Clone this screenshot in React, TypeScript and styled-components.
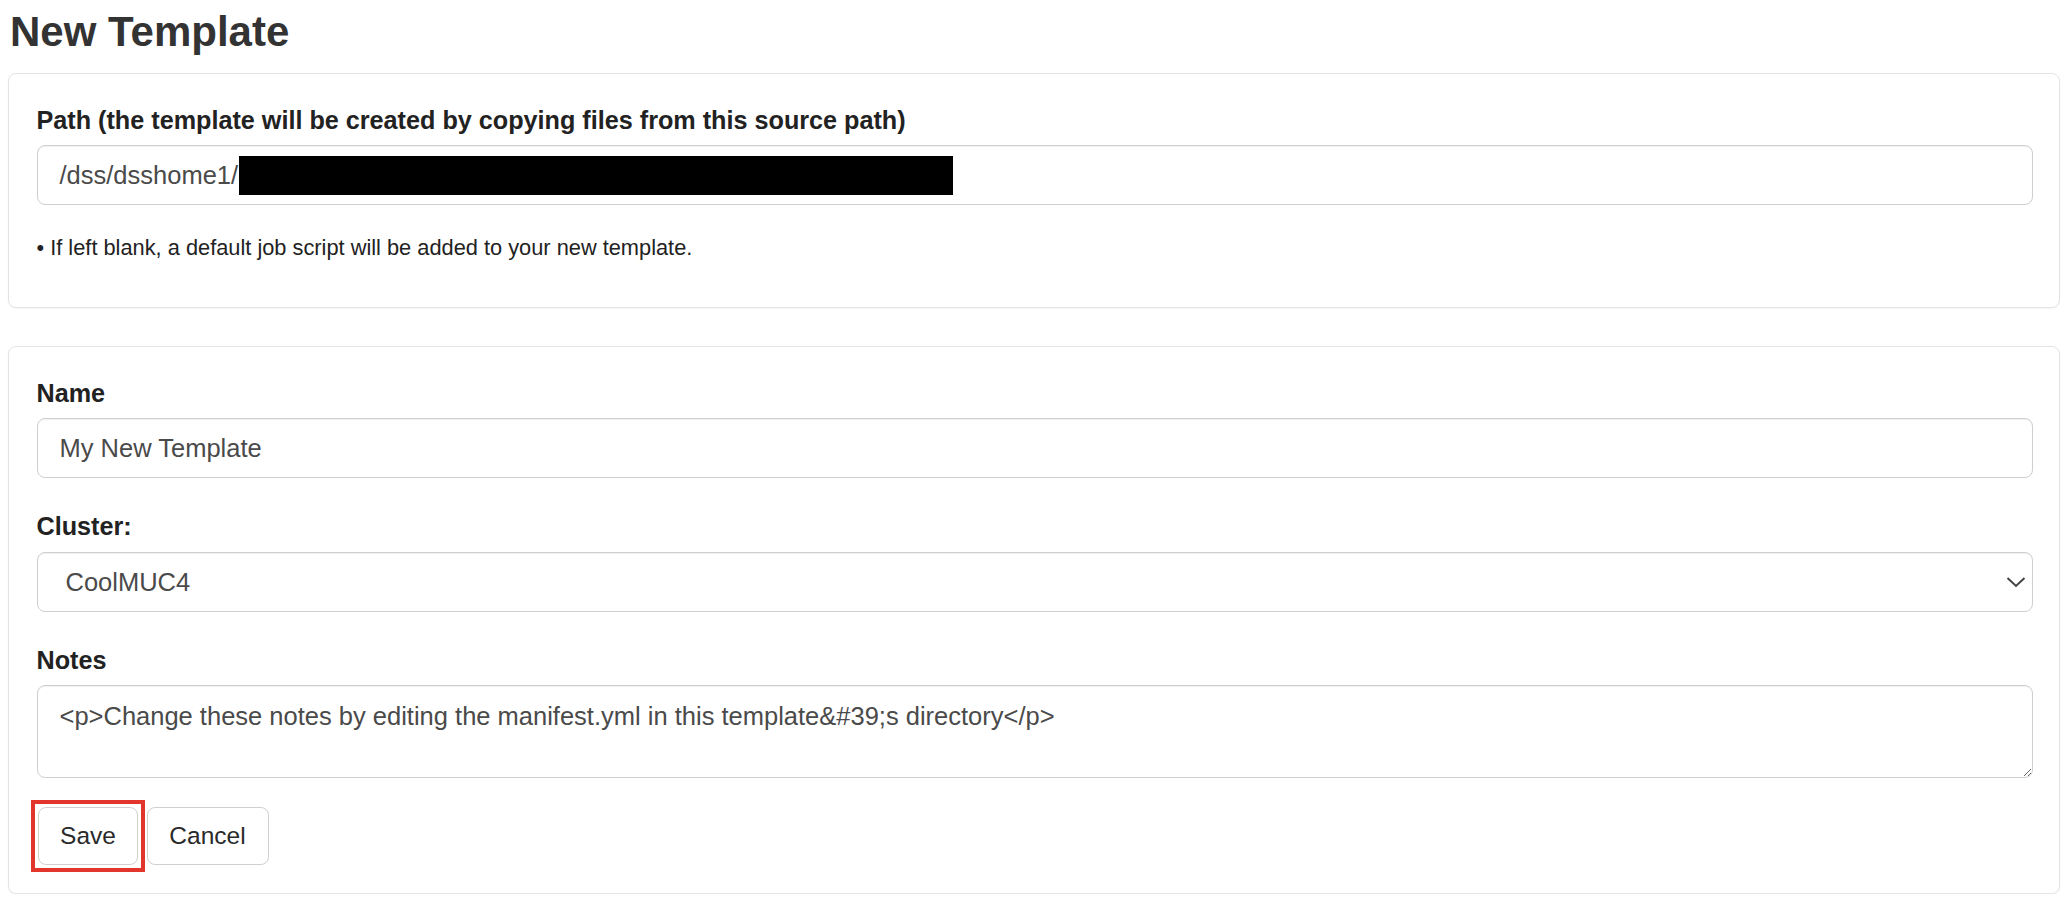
import styled, { createGlobalStyle } from "styled-components";

const GlobalStyle = createGlobalStyle`
  * { box-sizing: border-box; }
  body {
    margin: 0;
    background: #ffffff;
    font-family: "Liberation Sans", Arial, Helvetica, sans-serif;
    color: #212529;
  }
`

const Page = styled.div`
  padding: 7px 4px 0 8px;
`

const Title = styled.h3`
  margin: 0 0 15.5px 2px;
  font-size: 42px;
  line-height: 50.4px;
  font-weight: 600;
  color: #333333;
`

const Card = styled.section<{ $gap?: number }>`
  border: 1.5px solid #e4e4e4;
  border-radius: 8px;
  box-shadow: 0 1px 2px rgba(0, 0, 0, 0.04);
  background: #fff;
  padding: 28px 26px 28px 27.5px;
  margin-bottom: ${({ $gap }) => $gap ?? 0}px;
`

const FieldGroup = styled.div<{ $last?: boolean }>`
  margin-bottom: ${({ $last }) => ($last ? 0 : 30)}px;
`

const Label = styled.label`
  display: block;
  font-size: 25.2px;
  line-height: 36px;
  font-weight: 700;
  color: #222;
  margin-bottom: 7.5px;
`

const fieldLook = `
  width: 100%;
  border: 1.5px solid #cfcfcf;
  border-radius: 8px;
  background: #fff;
  box-shadow: inset 0 1px 1px rgba(0, 0, 0, 0.06);
  font-family: "Liberation Sans", Arial, Helvetica, sans-serif;
  font-size: 25.5px;
  color: #4a4a4a;
`

const PathField = styled.div`
  ${fieldLook}
  height: 60px;
  display: flex;
  align-items: center;
  padding: 0 22px;
`

const Redacted = styled.span`
  display: inline-block;
  width: 714px;
  height: 38.5px;
  margin-left: 1px;
  background: #000;
`

const Hint = styled.p`
  margin: 27px 0 15px;
  font-size: 21.8px;
  line-height: 31.5px;
  color: #222;
`

const TextInput = styled.input`
  ${fieldLook}
  display: block;
  height: 60px;
  padding: 0 22px;
  outline: none;
`

const SelectWrap = styled.div`
  position: relative;
`

const Select = styled.select`
  ${fieldLook}
  display: block;
  height: 60px;
  padding: 0 40px 0 28px;
  appearance: none;
  -webkit-appearance: none;
  outline: none;
`

const Chevron = styled.svg`
  position: absolute;
  right: 7px;
  top: 50%;
  transform: translateY(-50%);
  pointer-events: none;
`

const NotesArea = styled.textarea`
  ${fieldLook}
  display: block;
  height: 93px;
  padding: 12px 22px 8px;
  line-height: 36px;
  resize: vertical;
  outline: none;
`

const ButtonRow = styled.div`
  display: flex;
  gap: 8.5px;
  margin-top: 29px;
  padding-left: 1.5px;
`

const Highlight = styled.span`
  display: inline-flex;
  outline: 4px solid #e2362c;
  outline-offset: 3.5px;
`

const Button = styled.button<{ $width: number }>`
  width: ${({ $width }) => $width}px;
  height: 58px;
  border: 1.5px solid #d0d0d0;
  border-radius: 8px;
  background: #fff;
  font-family: "Liberation Sans", Arial, Helvetica, sans-serif;
  font-size: 24.5px;
  color: #2a2a2a;
  padding: 0;
  cursor: pointer;
`

const notesText = "<p>Change these notes by editing the manifest.yml in this template&#39;s directory</p>";

export default function App() {
  return (
    <>
      <GlobalStyle />
      <Page>
        <Title>New Template</Title>

        <Card $gap={38}>
          <Label>Path (the template will be created by copying files from this source path)</Label>
          <PathField>
            /dss/dsshome1/<Redacted />
          </PathField>
          <Hint>• If left blank, a default job script will be added to your new template.</Hint>
        </Card>

        <Card>
          <FieldGroup>
            <Label htmlFor="name">Name</Label>
            <TextInput id="name" defaultValue="My New Template" />
          </FieldGroup>

          <FieldGroup>
            <Label htmlFor="cluster">Cluster:</Label>
            <SelectWrap>
              <Select id="cluster" defaultValue="CoolMUC4">
                <option>CoolMUC4</option>
              </Select>
              <Chevron width="20" height="11" viewBox="0 0 20 11">
                <polyline points="1.5,1.5 10,9.5 18.5,1.5" fill="none" stroke="#444" strokeWidth="2" />
              </Chevron>
            </SelectWrap>
          </FieldGroup>

          <FieldGroup $last>
            <Label htmlFor="notes">Notes</Label>
            <NotesArea id="notes" defaultValue={notesText} />
          </FieldGroup>

          <ButtonRow>
            <Highlight>
              <Button $width={100}>Save</Button>
            </Highlight>
            <Button $width={122}>Cancel</Button>
          </ButtonRow>
        </Card>
      </Page>
    </>
  );
}
